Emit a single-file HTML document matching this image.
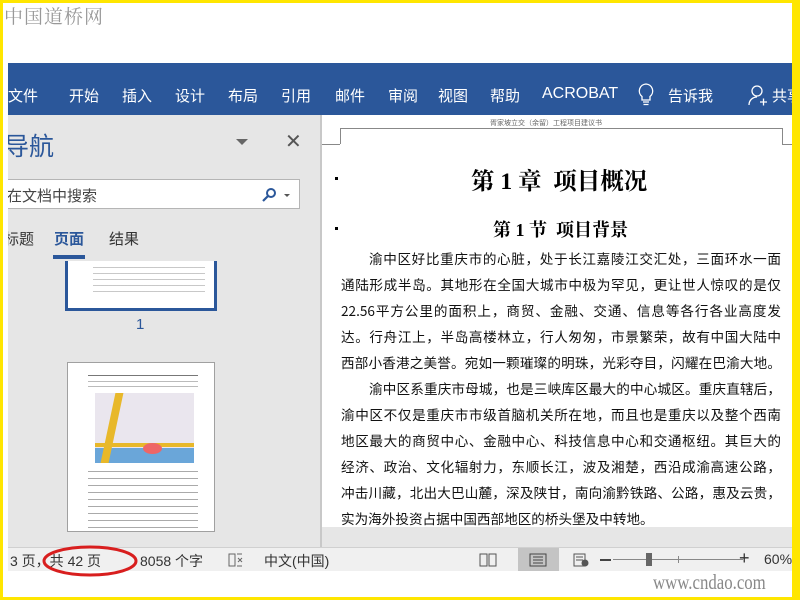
<!DOCTYPE html>
<html><head><meta charset="utf-8">
<style>
*{margin:0;padding:0;box-sizing:border-box}
body{width:800px;height:600px;position:relative;overflow:hidden;background:#fff;font-family:"Liberation Sans","Noto Sans CJK SC",sans-serif}
.abs{position:absolute}
.yb{position:absolute;background:#ffe600}
.rib{left:8px;top:63px;width:784px;height:52px;background:#2b579a;color:#fff;font-size:15px;overflow:hidden}
.rib span{position:absolute;top:22px;white-space:nowrap}
.nav{left:8px;top:115px;width:312px;height:432px;background:#e6e6e6;overflow:hidden}
.doc{left:320px;top:115px;width:472px;height:432px;background:#fff;border-left:2px solid #c8c8c8}
.line{position:absolute;left:341px;width:440px;height:26px;font-size:13.6px;line-height:26px;color:#111;text-align:justify;text-align-last:justify;white-space:nowrap;overflow:hidden;font-family:"Noto Sans CJK SC",sans-serif}
.tl{text-align-last:left}
.status{left:8px;top:547px;width:784px;height:24px;background:#f0f0f0;border-top:1px solid #d0d0d0;font-size:14px;color:#333;overflow:hidden}
.status span{position:absolute;top:3px;white-space:nowrap}
</style></head><body>
<div class="yb" style="left:0;top:0;width:800px;height:3px"></div>
<div class="yb" style="left:0;top:0;width:3px;height:600px"></div>
<div class="yb" style="left:792px;top:0;width:8px;height:600px"></div>
<div class="yb" style="left:0;top:597px;width:800px;height:3px"></div>
<div class="abs" style="left:4px;top:2px;font-size:19px;color:#999;font-family:'Noto Serif CJK SC',serif;letter-spacing:1px">中国道桥网</div>

<div class="abs rib">
<span style="left:0">文件</span><span style="left:61px">开始</span><span style="left:114px">插入</span><span style="left:167px">设计</span><span style="left:220px">布局</span><span style="left:273px">引用</span><span style="left:327px">邮件</span><span style="left:380px">审阅</span><span style="left:430px">视图</span><span style="left:482px">帮助</span><span style="left:534px;font-size:16px">ACROBAT</span>
<svg class="abs" style="left:629px;top:20px" width="18" height="24" viewBox="0 0 18 24"><path d="M9 1a7 7 0 0 0-4 12.5V17h8v-3.5A7 7 0 0 0 9 1zM6 19h6M6.5 21.5h5" fill="none" stroke="#fff" stroke-width="1.3"/></svg>
<span style="left:660px">告诉我</span>
<svg class="abs" style="left:740px;top:22px" width="20" height="22" viewBox="0 0 20 22"><circle cx="9" cy="6" r="5" fill="none" stroke="#fff" stroke-width="1.3"/><path d="M1 20c0-5 4-8 8-8M12 17h7M15.5 13.5v7" fill="none" stroke="#fff" stroke-width="1.3"/></svg>
<span style="left:764px">共享</span>
</div>

<div class="abs nav">
<div class="abs" style="left:-4px;top:12px;font-size:25px;color:#2b579a;font-family:'Noto Sans CJK SC',sans-serif">导航</div>
<div class="abs" style="left:228px;top:24px;width:0;height:0;border-left:6px solid transparent;border-right:6px solid transparent;border-top:6px solid #666"></div>
<div class="abs" style="left:277px;top:14px;font-size:20px;color:#555">✕</div>
<div class="abs" style="left:-2px;top:64px;width:294px;height:30px;background:#fff;border:1px solid #b5b5b5"><span class="abs" style="left:0;top:5px;font-size:15px;color:#444">在文档中搜索</span>
<svg class="abs" style="left:254px;top:7px" width="16" height="16" viewBox="0 0 16 16"><circle cx="10" cy="6" r="4" fill="none" stroke="#2b579a" stroke-width="2"/><path d="M7 9l-5 5" stroke="#2b579a" stroke-width="2.2"/></svg>
<div class="abs" style="left:277px;top:14px;border-left:3px solid transparent;border-right:3px solid transparent;border-top:3px solid #555"></div></div>
<div class="abs" style="left:-4px;top:113px;font-size:15px;color:#333">标题</div>
<div class="abs" style="left:46px;top:113px;font-size:15px;color:#2b579a;font-weight:bold">页面</div>
<div class="abs" style="left:45px;top:140px;width:32px;height:4px;background:#2b579a"></div>
<div class="abs" style="left:101px;top:113px;font-size:15px;color:#333">结果</div>
<div class="abs" style="left:57px;top:146px;width:152px;height:50px;background:#fff;border:3px solid #2b579a;border-top:none"></div>
<div class="abs" style="left:85px;top:150px;width:112px;height:30px;background:repeating-linear-gradient(#fff 0 2px,#bbb 2px 3px,#fff 3px 6px);opacity:.8"></div>
<div class="abs" style="left:128px;top:201px;font-size:15px;color:#2b579a">1</div>
<div class="abs" style="left:59px;top:247px;width:148px;height:170px;background:#fff;border:1px solid #a0a0a0;overflow:hidden">
<div class="abs" style="left:20px;top:12px;width:110px;height:1px;background:#777"></div>
<div class="abs" style="left:20px;top:16px;width:110px;height:10px;background:repeating-linear-gradient(#fff 0 2px,#bbb 2px 3px,#fff 3px 5px)"></div>
<div class="abs" style="left:27px;top:30px;width:99px;height:70px;background:#eae6ee"></div>
<div class="abs" style="left:27px;top:85px;width:99px;height:15px;background:#6aa6d9"></div>
<div class="abs" style="left:40px;top:30px;width:8px;height:70px;background:#e8b82a;transform:skewX(-12deg)"></div>
<div class="abs" style="left:27px;top:80px;width:99px;height:4px;background:#e8b82a"></div>
<div class="abs" style="left:75px;top:80px;width:19px;height:11px;border-radius:50%;background:#ee6666"></div>
<div class="abs" style="left:20px;top:105px;width:110px;height:65px;background:repeating-linear-gradient(#fff 0 3px,#aaa 3px 4px,#fff 4px 7px)"></div>
</div>
</div>

<div class="abs doc"></div>
<div class="abs" style="left:340px;top:128px;width:442px;height:1px;background:#888"></div>
<div class="abs" style="left:340px;top:128px;width:1px;height:16px;background:#888"></div>
<div class="abs" style="left:322px;top:144px;width:18px;height:1px;background:#888"></div>
<div class="abs" style="left:782px;top:128px;width:1px;height:16px;background:#888"></div>
<div class="abs" style="left:782px;top:144px;width:10px;height:1px;background:#888"></div>
<div class="abs" style="left:490px;top:118px;font-size:7px;color:#666">胥家坡立交（余留）工程项目建议书</div>
<div class="abs" style="left:335px;top:177px;width:3px;height:3px;background:#000"></div>
<div class="abs" style="left:335px;top:227px;width:3px;height:3px;background:#000"></div>
<div class="abs" style="left:471px;top:162px;font-size:23.5px;font-weight:bold;font-family:'Liberation Serif','Noto Serif CJK SC',serif;white-space:nowrap">第 1 章&nbsp; 项目概况</div>
<div class="abs" style="left:493px;top:216px;font-size:18px;font-weight:bold;font-family:'Liberation Serif','Noto Serif CJK SC',serif;white-space:nowrap">第 1 节&nbsp; 项目背景</div>
<div class="line" style="top:245px;left:369px;width:412px">渝中区好比重庆市的心脏，处于长江嘉陵江交汇处，三面环水一面</div>
<div class="line" style="top:271px">通陆形成半岛。其地形在全国大城市中极为罕见，更让世人惊叹的是仅</div>
<div class="line" style="top:297px">22.56平方公里的面积上，商贸、金融、交通、信息等各行各业高度发</div>
<div class="line" style="top:323px">达。行舟江上，半岛高楼林立，行人匆匆，市景繁荣，故有中国大陆中</div>
<div class="line" style="top:349px;width:440px">西部小香港之美誉。宛如一颗璀璨的明珠，光彩夺目，闪耀在巴渝大地。</div>
<div class="line" style="top:375px;left:369px;width:412px">渝中区系重庆市母城，也是三峡库区最大的中心城区。重庆直辖后，</div>
<div class="line" style="top:401px">渝中区不仅是重庆市市级首脑机关所在地，而且也是重庆以及整个西南</div>
<div class="line" style="top:427px">地区最大的商贸中心、金融中心、科技信息中心和交通枢纽。其巨大的</div>
<div class="line" style="top:453px">经济、政治、文化辐射力，东顺长江，波及湘楚，西沿成渝高速公路，</div>
<div class="line" style="top:479px">冲击川藏，北出大巴山麓，深及陕甘，南向渝黔铁路、公路，惠及云贵，</div>
<div class="line tl" style="top:505px">实为海外投资占据中国西部地区的桥头堡及中转地。</div>
<div class="abs" style="left:322px;top:527px;width:470px;height:20px;background:#e6e6e6"></div>

<div class="abs status">
<span style="left:2px">3 页，共 42 页</span><span style="left:132px">8058 个字</span>
<svg class="abs" style="left:220px;top:5px" width="16" height="14"><path d="M1 1h6v12H1zM9 1h5M9 13h5M10 5l4 4M14 5l-4 4" fill="none" stroke="#666"/></svg>
<span style="left:256px">中文(中国)</span>
<svg class="abs" style="left:471px;top:5px" width="18" height="14"><path d="M1 1h7v12H1zM10 1h7v12h-7z" fill="none" stroke="#555"/></svg>
<div class="abs" style="left:510px;top:0;width:41px;height:23px;background:#c4c4c4"></div>
<svg class="abs" style="left:521px;top:5px" width="18" height="14"><path d="M1 1h16v12H1zM4 4h10M4 7h10M4 10h10" fill="none" stroke="#444"/></svg>
<svg class="abs" style="left:565px;top:5px" width="16" height="14"><path d="M1 1h11v12H1zM3 4h7M3 7h7" fill="none" stroke="#555"/><circle cx="12" cy="10" r="3.5" fill="#555"/></svg>
<div class="abs" style="left:592px;top:11px;width:11px;height:2px;background:#444"></div>
<div class="abs" style="left:605px;top:11px;width:130px;height:1px;background:#888"></div>
<div class="abs" style="left:638px;top:5px;width:6px;height:13px;background:#666"></div>
<div class="abs" style="left:670px;top:8px;width:1px;height:7px;background:#888"></div>
<span style="left:731px;top:0;font-size:18px">+</span>
<span style="left:756px">60%</span>
</div>
<svg class="abs" style="left:40px;top:543px" width="100" height="40"><ellipse cx="50" cy="18" rx="46" ry="14" fill="none" stroke="#d81e1e" stroke-width="3"/></svg>
<div class="abs" style="left:653px;top:570px;font-size:21px;color:#888;font-family:'Liberation Serif',serif;transform:scaleX(.8);transform-origin:left">www.cndao.com</div>
</body></html>
